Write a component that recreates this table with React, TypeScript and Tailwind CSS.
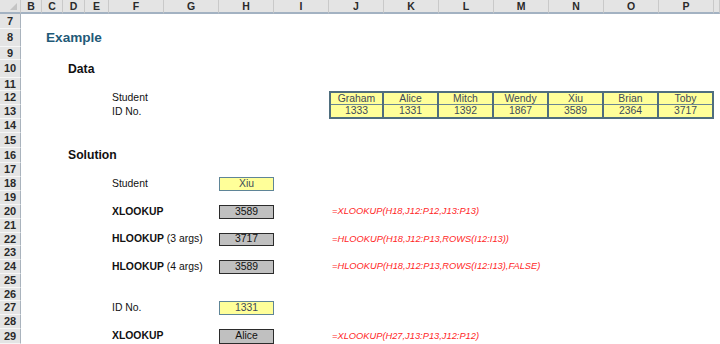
import React from "react";

const COLS =
  "grid grid-rows-1 grid-cols-[21px_21px_21px_22px_24px_55px_55px_55px_55px_55px_55px_55px_55px_55px_55px_55px_1fr] leading-none";

const HEIGHTS: Record<number, string> = {
  7: "h-[15px]",
  8: "h-[18px]",
  9: "h-[13px]",
  10: "h-[18px]",
  11: "h-[13px]",
  12: "h-[14px]",
  13: "h-[14px]",
  14: "h-[14px]",
  15: "h-[15px]",
  16: "h-[15px]",
  17: "h-[14px]",
  18: "h-[14px]",
  19: "h-[14px]",
  20: "h-[14px]",
  21: "h-[14px]",
  22: "h-[13px]",
  23: "h-[14px]",
  24: "h-[14px]",
  25: "h-[14px]",
  26: "h-[13px]",
  27: "h-[14px]",
  28: "h-[14px]",
  29: "h-[15px]",
};

function Row({ n, children }: { n: number; children?: React.ReactNode }) {
  return (
    <div className={`${COLS} ${HEIGHTS[n]}`}>
      <div className="col-start-1 row-start-1 flex items-center justify-center bg-[#e4e4e4] border-r border-r-[#a9b3bd] border-b border-b-[#f6f6f6] text-[11px] font-bold text-[#2a2a2a]">
        {n}
      </div>
      {children}
    </div>
  );
}

const headers = ["B", "C", "D", "E", "F", "G", "H", "I", "J", "K", "L", "M", "N", "O", "P", ""];

const names = ["Graham", "Alice", "Mitch", "Wendy", "Xiu", "Brian", "Toby"];
const ids = ["1333", "1331", "1392", "1867", "3589", "2364", "3717"];
const colStart = [
  "col-start-10",
  "col-start-11",
  "col-start-12",
  "col-start-13",
  "col-start-14",
  "col-start-15",
  "col-start-16",
];

function Label({ children }: { children: React.ReactNode }) {
  return (
    <div className="col-start-6 col-span-3 row-start-1 flex items-center pl-[3px] whitespace-nowrap text-[10.4px] text-[#111]">
      {children}
    </div>
  );
}

function YBox({ v }: { v: string }) {
  return (
    <div className="col-start-8 row-start-1 flex items-center justify-center bg-[#ffff99] border border-[#5f8597] text-[10.4px] text-[#3e4b5a]">
      {v}
    </div>
  );
}

function GBox({ v }: { v: string }) {
  return (
    <div className="col-start-8 row-start-1 flex items-center justify-center bg-[#c0c0c0] border border-[#2b2b2b] text-[10.4px] text-[#111]">
      {v}
    </div>
  );
}

function Formula({ f }: { f: string }) {
  return (
    <div className="col-start-10 col-span-7 row-start-1 flex items-center pl-[3px] whitespace-nowrap italic text-[9.3px] text-[#ff1f1f]">
      {f}
    </div>
  );
}

export default function App() {
  return (
    <div
      className="w-[720px] h-[344px] overflow-hidden bg-white"
      style={{ fontFamily: '"Liberation Sans", Arial, sans-serif' }}
    >
      {/* column header */}
      <div className={`${COLS} h-[14px]`}>
        <div className="relative bg-[#e4e4e4] border-r border-r-[#c9c9c9] border-b-2 border-b-[#a3b2c2]">
          <div className="absolute right-[3px] bottom-[2px] w-0 h-0 border-l-[7px] border-l-transparent border-b-[7px] border-b-[#c4c4c4]" />
        </div>
        {headers.map((h, i) => (
          <div
            key={i}
            className="flex items-center justify-center bg-[#e4e4e4] border-r border-r-[#c9c9c9] border-b-2 border-b-[#a3b2c2] text-[10.5px] font-bold text-[#2a2a2a]"
          >
            {h}
          </div>
        ))}
      </div>

      <Row n={7} />
      <Row n={8}>
        <div className="col-start-3 col-span-5 row-start-1 flex items-center pl-[4px] whitespace-nowrap font-bold text-[13.6px] text-[#1f5a78]">
          Example
        </div>
      </Row>
      <Row n={9} />
      <Row n={10}>
        <div className="col-start-4 col-span-4 row-start-1 flex items-center pl-[5px] whitespace-nowrap font-bold text-[12.2px] text-[#111]">
          Data
        </div>
      </Row>
      <Row n={11} />
      <Row n={12}>
        <Label>Student</Label>
        {names.map((nm, i) => (
          <div
            key={nm}
            className={`${colStart[i]} row-start-1 flex items-center justify-center bg-[#ffff99] border-t-2 border-r-2 border-[#4f6e7e] shadow-[inset_0_-1px_0_#6a8592] ${i === 0 ? "border-l-2" : ""} text-[10.4px] text-[#3e4b5a]`}
          >
            {nm}
          </div>
        ))}
      </Row>
      <Row n={13}>
        <Label>ID No.</Label>
        {ids.map((v, i) => (
          <div
            key={v + i}
            className={`${colStart[i]} row-start-1 flex items-center justify-center bg-[#ffff99] border-b-2 border-r-2 border-[#4f6e7e] ${i === 0 ? "border-l-2" : ""} text-[10.4px] text-[#3e4b5a]`}
          >
            {v}
          </div>
        ))}
      </Row>
      <Row n={14} />
      <Row n={15} />
      <Row n={16}>
        <div className="col-start-4 col-span-4 row-start-1 flex items-center pl-[5px] whitespace-nowrap font-bold text-[12.2px] text-[#111]">
          Solution
        </div>
      </Row>
      <Row n={17} />
      <Row n={18}>
        <Label>Student</Label>
        <YBox v="Xiu" />
      </Row>
      <Row n={19} />
      <Row n={20}>
        <Label>
          <span className="font-bold">XLOOKUP</span>
        </Label>
        <GBox v="3589" />
        <Formula f="=XLOOKUP(H18,J12:P12,J13:P13)" />
      </Row>
      <Row n={21} />
      <Row n={22}>
        <Label>
          <span className="font-bold">HLOOKUP</span>&nbsp;(3 args)
        </Label>
        <GBox v="3717" />
        <Formula f="=HLOOKUP(H18,J12:P13,ROWS(I12:I13))" />
      </Row>
      <Row n={23} />
      <Row n={24}>
        <Label>
          <span className="font-bold">HLOOKUP</span>&nbsp;(4 args)
        </Label>
        <GBox v="3589" />
        <Formula f="=HLOOKUP(H18,J12:P13,ROWS(I12:I13),FALSE)" />
      </Row>
      <Row n={25} />
      <Row n={26} />
      <Row n={27}>
        <Label>ID No.</Label>
        <YBox v="1331" />
      </Row>
      <Row n={28} />
      <Row n={29}>
        <Label>
          <span className="font-bold">XLOOKUP</span>
        </Label>
        <GBox v="Alice" />
        <Formula f="=XLOOKUP(H27,J13:P13,J12:P12)" />
      </Row>
    </div>
  );
}
